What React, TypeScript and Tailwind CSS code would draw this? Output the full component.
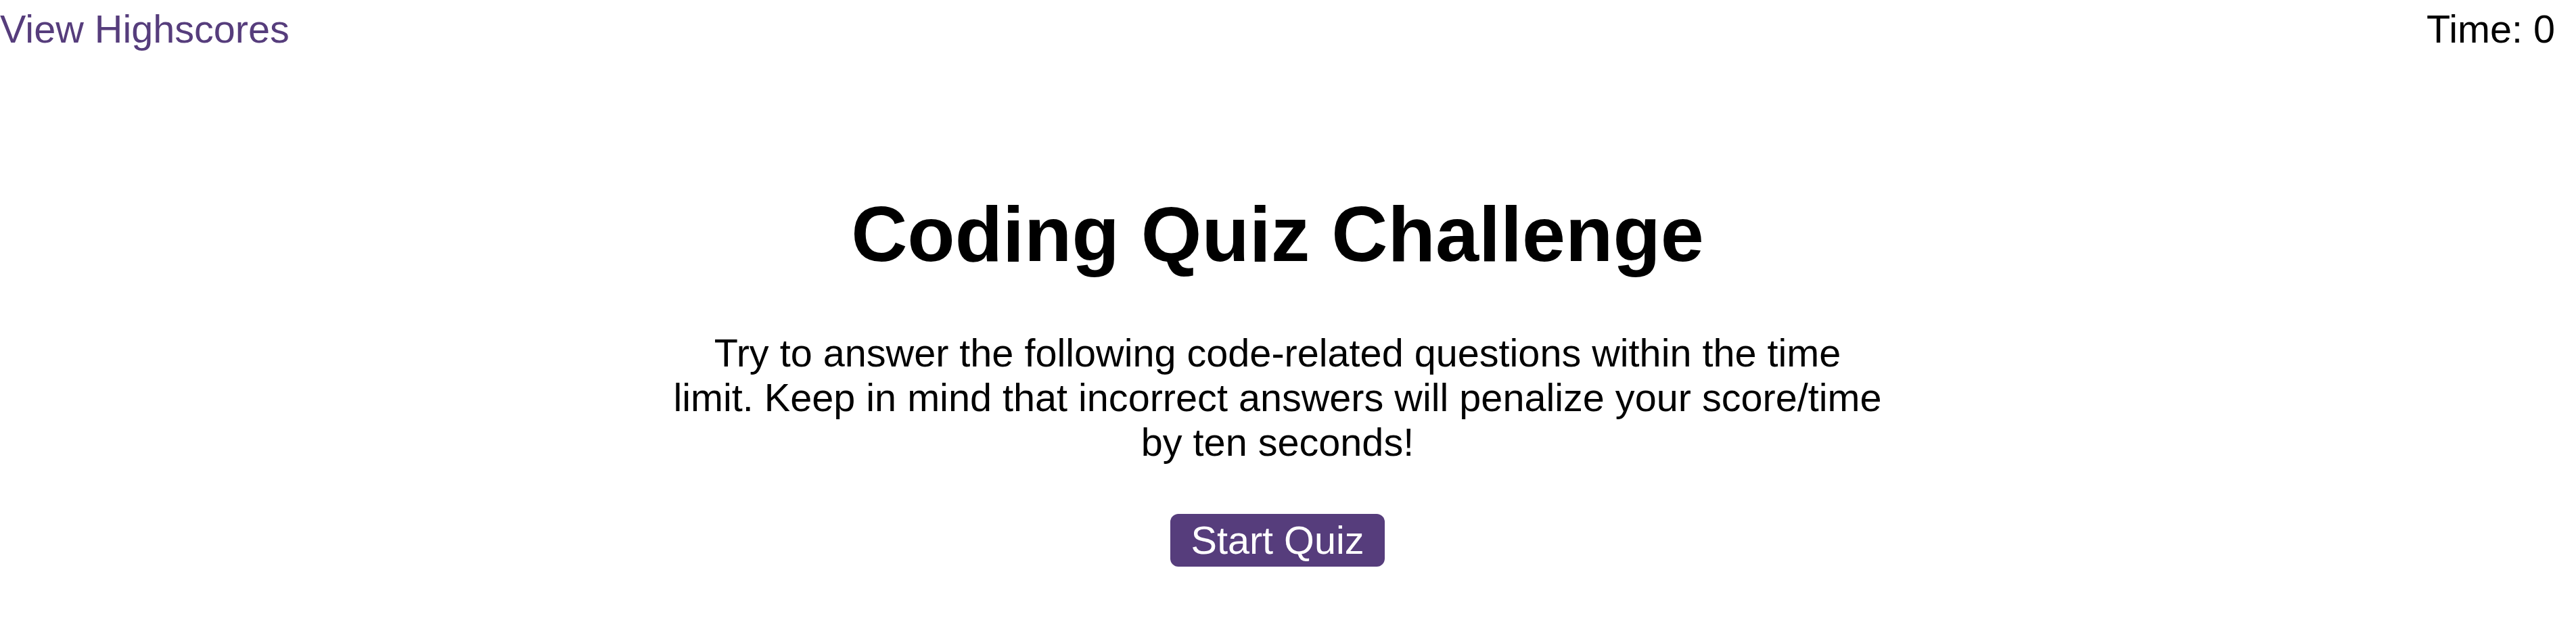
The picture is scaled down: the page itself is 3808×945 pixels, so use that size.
export default function App() {
  return (
    <div className="min-h-screen bg-white pr-[31px] font-['Liberation_Sans',Arial,sans-serif] text-black">
      {/* Header */}
      <header className="flex items-start justify-between pt-[10px] text-[57.6px] leading-[1.15]">
        <a href="#" className="text-[#563d7c]">
          View Highscores
        </a>
        <div>Time: 0</div>
      </header>

      {/* Start screen */}
      <main className="flex flex-col items-center text-center">
        <h1 className="mt-[204px] text-[115.2px] font-bold leading-[1.15]">
          Coding Quiz Challenge
        </h1>
        <p className="mt-[76px] w-[1792px] text-[57.6px] leading-[1.15]">
          Try to answer the following code-related questions within the time
          limit. Keep in mind that incorrect answers will penalize your
          score/time by ten seconds!
        </p>
        <button className="mt-[73px] rounded-[12px] bg-[#563d7c] px-[30px] py-[5.5px] text-[57.6px] leading-[1.15] text-white">
          Start Quiz
        </button>
      </main>
    </div>
  );
}
